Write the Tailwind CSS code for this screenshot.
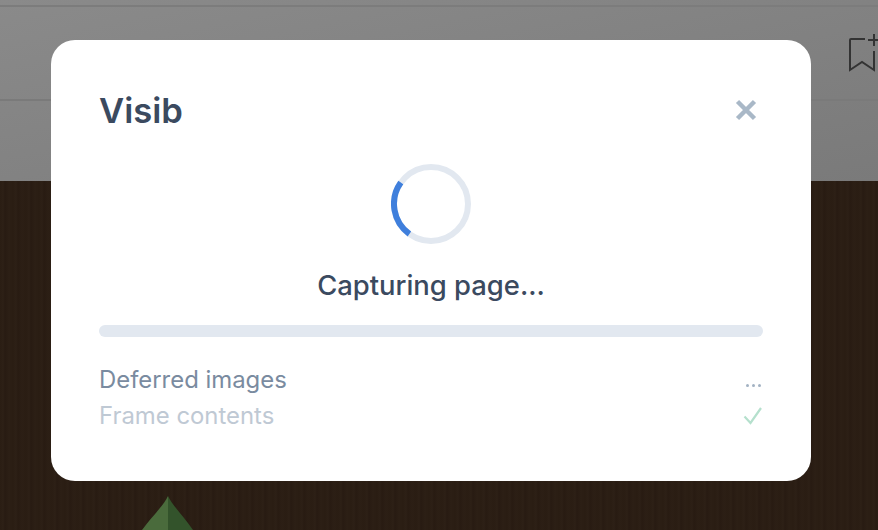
<!DOCTYPE html>
<html lang="en">

<head>
    <meta charset="UTF-8">
    <title>Visib</title>
    <script src="https://cdn.jsdelivr.net/npm/@tailwindcss/browser@4"></script>
</head>

<body class="font-['Inter',sans-serif]">
    <div class="relative w-[878px] h-[530px] overflow-hidden bg-[#2b1e14]">
        <!-- page behind the overlay -->
        <div class="h-[181px] bg-gradient-to-br from-[#8a8a8a] to-[#7a7a7a]">
            <div class="h-[101px] pt-[5px] border-b-2 border-[#7a7a7a]">
                <div class="h-[2px] bg-[#7c7c7c]"></div>
                <div class="flex justify-end pt-[27px] -mr-[1px]">
                    <svg class="w-[32px] h-[40px]" viewBox="0 0 32 40" fill="none" stroke="#333" stroke-width="2">
                        <path d="M18 5H4a1 1 0 0 0-1 1v30l12-8 12 8V17" />
                        <path d="M27 0v12M21 6h11" />
                    </svg>
                </div>
            </div>
        </div>
        <div class="h-[349px] bg-[repeating-linear-gradient(90deg,#2a1d13_0px,#2d2016_3px,#281b12_5px,#2c1f15_9px,#2a1d13_13px)]"></div>
        <svg class="absolute left-[130px] top-[496px] w-[78px] h-[34px]" viewBox="0 0 78 34">
            <path d="M38 0 C34 9 24 18 12 34 H38 Z" fill="#4a6b3c" />
            <path d="M38 0 C42 9 52 18 63 34 H38 Z" fill="#33532b" />
        </svg>

        <!-- modal -->
        <div class="absolute left-[51px] top-[40px] w-[760px] h-[441px] bg-white rounded-[24px] px-[48px] pt-[47px]">
            <div class="flex items-center justify-between h-[46px]">
                <h1 class="text-[34.6px] font-semibold text-[#3b4a5f] leading-none">Visib</h1>
                <svg class="w-[22px] h-[22px] mr-[6px] -mt-[1px]" viewBox="0 0 22 22" fill="none" stroke="#a9b8c7" stroke-width="4.5">
                    <path d="M2.5 2.5 19.5 19.5M19.5 2.5 2.5 19.5" />
                </svg>
            </div>
            <div class="flex flex-col items-center">
                <svg class="w-[80px] h-[80px] mt-[31px]" viewBox="0 0 80 80" fill="none" stroke-width="6">
                    <circle cx="40" cy="40" r="37" stroke="#e2e8f0" />
                    <path d="M18.4 70 A37 37 0 0 1 9.8 18.6" stroke="#3f7fdc" />
                </svg>
                <p class="mt-[23px] text-[27.4px] font-medium text-[#3b4a5f] leading-[36px]">Capturing page...</p>
            </div>
            <div class="mt-[22px] h-[12px] rounded-full bg-[#e2e8f0]"></div>
            <div class="mt-[28px] flex flex-col gap-[6px] text-[23.9px] leading-[30px]">
                <div class="flex justify-between items-center text-[#7a8ba0]">
                    <span>Deferred images</span>
                    <span class="flex gap-[3px] mt-[11px] mr-[2px]">
                        <i class="w-[3px] h-[3px] rounded-full bg-[#a3b2c3]"></i>
                        <i class="w-[3px] h-[3px] rounded-full bg-[#a3b2c3]"></i>
                        <i class="w-[3px] h-[3px] rounded-full bg-[#a3b2c3]"></i>
                    </span>
                </div>
                <div class="flex justify-between items-center text-[#bfc9d4]">
                    <span>Frame contents</span>
                    <svg class="w-[20px] h-[18px]" viewBox="0 0 20 18" fill="none" stroke="#b5e0cd" stroke-width="2.2">
                        <path d="M1.5 9.5 7.5 16 18 1" />
                    </svg>
                </div>
            </div>
        </div>
    </div>
</body>

</html>
